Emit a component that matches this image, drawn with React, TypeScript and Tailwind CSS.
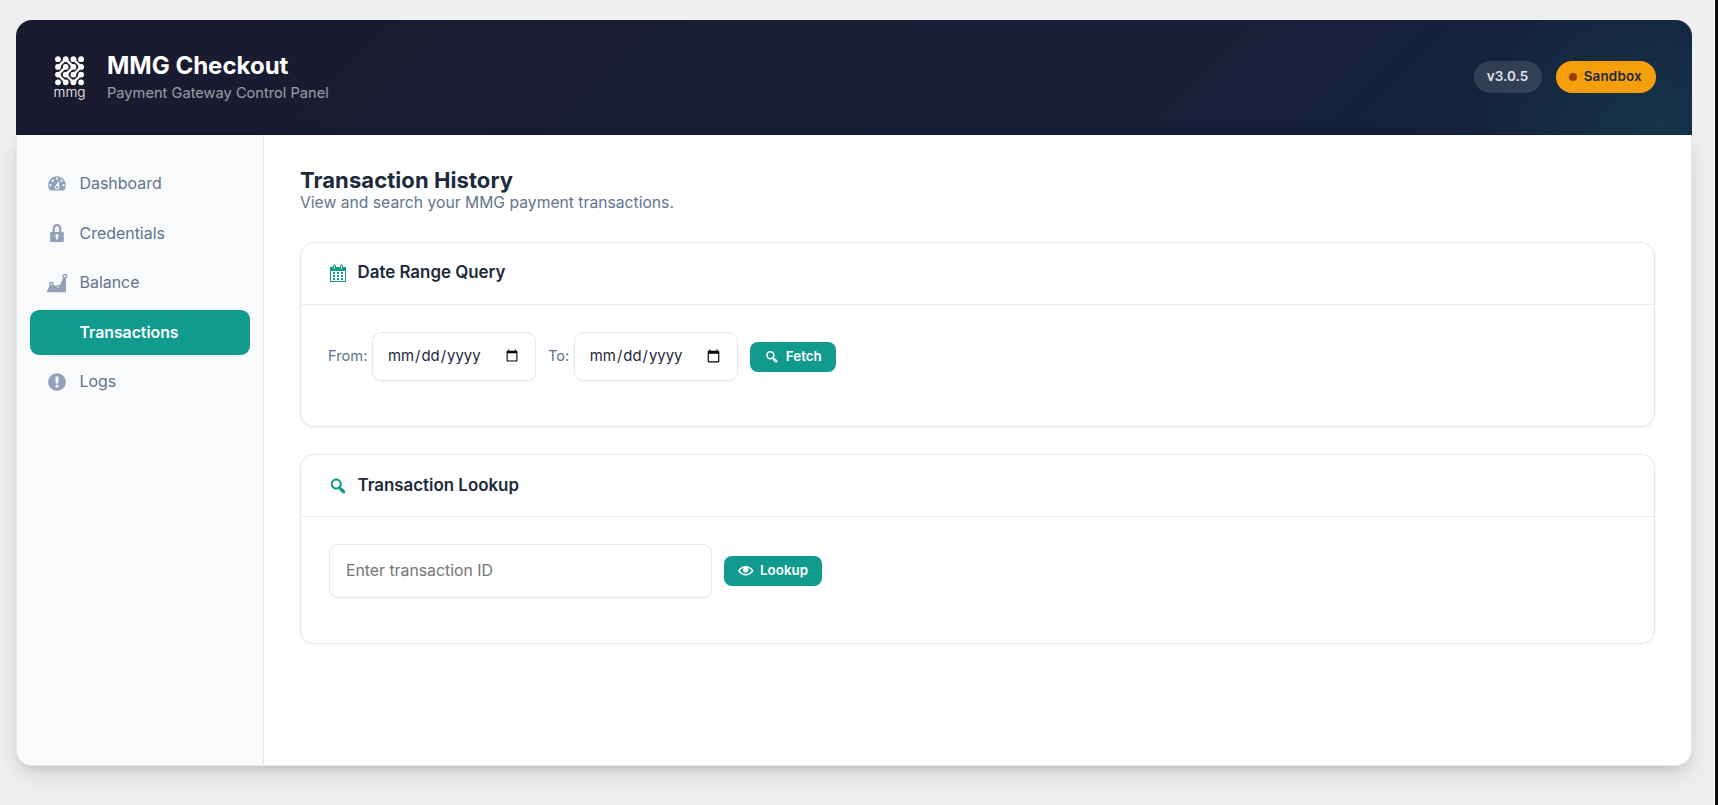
import type { ReactNode } from "react";

const ICONS = {
  dashboard:
    "M3.76 16h12.48c1.1-1.37 1.76-3.11 1.76-5 0-4.42-3.58-8-8-8s-8 3.58-8 8c0 1.89.66 3.63 1.76 5zM10 4c.55 0 1 .45 1 1s-.45 1-1 1-1-.45-1-1 .45-1 1-1zM6 6c.55 0 1 .45 1 1s-.45 1-1 1-1-.45-1-1 .45-1 1-1zm8 0c.55 0 1 .45 1 1s-.45 1-1 1-1-.45-1-1 .45-1 1-1zm-5.37 5.55L12 7v6c0 1.1-.9 2-2 2s-2-.9-2-2c0-.57.24-1.08.63-1.45zM4 10c.55 0 1 .45 1 1s-.45 1-1 1-1-.45-1-1 .45-1 1-1zm12 0c.55 0 1 .45 1 1s-.45 1-1 1-1-.45-1-1 .45-1 1-1zm-5 3c0-.55-.45-1-1-1s-1 .45-1 1 .45 1 1 1 1-.45 1-1z",
  lock: "M14 9h1c.7 0 1.2.45 1.2 1v7.2c0 .55-.45 1-1 1H4.8c-.55 0-1-.45-1-1V10c0-.55.5-1 1.2-1h1V6c0-2.5 1.79-4.2 4-4.2s4 1.7 4 4.2v3zm-2 0V6c0-1.3-.9-2.2-2-2.2S8 4.7 8 6v3h4zm-1 7l-.36-2.15c.51-.24.86-.75.86-1.35 0-.83-.67-1.5-1.5-1.5s-1.5.67-1.5 1.5c0 .6.35 1.11.86 1.35L9 16h2z",
  chart: "M.5 18.5L3.700 11.500H6.400L10 13L12.500 12L15.800 5H18.200V18.500z",
  warning:
    "M10 2c4.42 0 8 3.58 8 8s-3.58 8-8 8-8-3.58-8-8 3.58-8 8-8zm1.13 9.38l.35-6.46H8.52l.35 6.46h2.26zm-.09 3.36c.24-.23.37-.55.37-.96 0-.42-.12-.74-.36-.97s-.59-.35-1.06-.35-.82.12-1.07.35-.37.55-.37.97c0 .41.13.73.38.96.26.23.61.34 1.06.34s.8-.11 1.05-.34z",
  calendar:
    "M15 4h3v15H2V4h3V3c0-.41.15-.76.44-1.06.29-.29.65-.44 1.06-.44s.77.15 1.06.44c.29.3.44.65.44 1.06v1h4V3c0-.41.15-.76.44-1.06.29-.29.65-.44 1.06-.44s.77.15 1.06.44c.29.3.44.65.44 1.06v1zM6 3v2.5c0 .14.05.26.15.36.09.09.21.14.35.14s.26-.05.35-.14c.1-.1.15-.22.15-.36V3c0-.14-.05-.26-.15-.35-.09-.1-.21-.15-.35-.15s-.26.05-.35.15c-.1.09-.15.21-.15.35zm7 0v2.5c0 .14.05.26.14.36.1.09.22.14.36.14s.26-.05.36-.14c.09-.1.14-.22.14-.36V3c0-.14-.05-.26-.14-.35-.1-.1-.22-.15-.36-.15s-.26.05-.36.15c-.09.09-.14.21-.14.35zm4 15V8H3v10h14zM5 9h2v2H5V9zm4 0h2v2H9V9zm4 0h2v2h-2V9zm-8 3h2v2H5v-2zm4 0h2v2H9v-2zm4 0h2v2h-2v-2zm-8 3h2v2H5v-2zm4 0h2v2H9v-2zm4 0h2v2h-2v-2z",
  search:
    "M12.14 4.18c1.87 1.87 2.11 4.75.72 6.89.12.1.22.21.36.31.2.16.47.36.81.59.34.24.56.39.66.47.42.31.73.57.94.78.32.32.6.65.84 1 .25.35.44.69.59 1.04.14.35.21.68.18 1-.02.32-.14.59-.36.81s-.49.34-.81.36c-.31.02-.65-.04-.99-.19-.35-.14-.7-.34-1.04-.59-.35-.24-.68-.52-1-.84-.21-.21-.47-.52-.77-.93-.1-.13-.25-.35-.47-.66-.22-.32-.4-.57-.56-.78-.16-.2-.29-.35-.44-.5-2.07 1.09-4.69.76-6.44-.98-2.14-2.15-2.14-5.64 0-7.78 2.15-2.15 5.63-2.15 7.78 0zm-1.41 6.36c1.36-1.37 1.36-3.58 0-4.95-1.37-1.37-3.59-1.37-4.95 0-1.37 1.37-1.37 3.58 0 4.95 1.36 1.37 3.58 1.37 4.95 0z",
  eye: "M19.7 9.4C17.7 6 14 3.9 10 3.9S2.3 6 .3 9.4L0 10l.3.6c2 3.4 5.7 5.5 9.7 5.5s7.7-2.1 9.7-5.5l.3-.6-.3-.6zM10 14.1c-3.1 0-6-1.6-7.7-4.1C3.6 8 5.7 6.6 8 6.1c-.9.6-1.5 1.7-1.5 2.9 0 1.9 1.6 3.5 3.5 3.5s3.5-1.6 3.5-3.5c0-1.2-.6-2.3-1.5-2.9 2.3.5 4.4 1.9 5.7 3.9-1.7 2.5-4.6 4.1-7.7 4.1z",
};

type IconName = keyof typeof ICONS;

function Icon({ name, className }: { name: IconName; className: string }) {
  return (
    <svg viewBox="0 0 20 20" fill="currentColor" fillRule="evenodd" overflow="visible" className={className}>
      <path d={ICONS[name]} />
      {name === "chart" && (
        <g fill="#f8fafc" stroke="currentColor" strokeWidth="1.3">
          <circle cx="4.9" cy="11" r="1.5" />
          <circle cx="10.9" cy="13.7" r="1.3" />
          <circle cx="17.1" cy="3.8" r="1.6" />
        </g>
      )}
    </svg>
  );
}

const DOTS = [0, 1, 2, 3].flatMap((row) => [0, 1, 2, 3].map((col) => ({ x: 6 + col * 7.7, y: 4.2 + row * 7.7 })));

function Logo() {
  return (
    <svg viewBox="0 0 34 46" className="h-[46px] w-[34px]" fill="white" overflow="visible">
      {DOTS.map((d) => (
        <circle key={`${d.x}-${d.y}`} cx={d.x} cy={d.y} r="2.9" />
      ))}
      <path
        stroke="white"
        strokeWidth="2.4"
        fill="none"
        d="M6 11.9L13.7 4.2M21.4 4.2L29.1 11.9M13.7 4.2L21.4 11.9M6 19.6L13.7 11.9M13.7 19.6L21.4 11.9M21.4 19.6L29.1 11.9M6 19.6L13.7 27.3M13.7 19.6L21.4 27.3L29.1 19.6"
      />
      <text x="17.5" y="42" textAnchor="middle" textLength="32" lengthAdjust="spacingAndGlyphs" fontSize="13.2" fontWeight="300" fontFamily="Inter, sans-serif">
        mmg
      </text>
    </svg>
  );
}

const NAV: { label: string; icon?: IconName; active?: boolean }[] = [
  { label: "Dashboard", icon: "dashboard" },
  { label: "Credentials", icon: "lock" },
  { label: "Balance", icon: "chart" },
  { label: "Transactions", active: true },
  { label: "Logs", icon: "warning" },
];

function Card({ icon, title, className, headClass, children }: { icon: IconName; title: string; className: string; headClass: string; children: ReactNode }) {
  return (
    <section className={`flex flex-col rounded-[14px] border border-slate-200 bg-white shadow-[0_1px_3px_rgba(0,0,0,0.06)] ${className}`}>
      <div className={`flex h-[62px] shrink-0 items-center gap-[9.5px] border-b border-[#ebeff4] px-[27px] ${headClass}`}>
        <Icon name={icon} className="size-5 text-[#109b8e]" />
        <h3 className="text-[16.9px] font-semibold text-slate-800">{title}</h3>
      </div>
      {children}
    </section>
  );
}

function Button({ icon, children }: { icon: IconName; children: string }) {
  return (
    <button className="flex h-[30px] items-center gap-[6.5px] rounded-lg bg-[#109b8e] px-[14px] text-[13.3px] font-semibold tracking-[0.06px] text-white">
      <Icon name={icon} className="size-[15.5px]" />
      {children}
    </button>
  );
}

function DateField({ label }: { label: string }) {
  return (
    <label className="flex items-center gap-[5px] text-[14.7px] text-slate-500">
      {label}
      <input
        type="date"
        className="h-[49px] w-[163.5px] rounded-[9px] border border-slate-200 bg-white px-[13.5px] text-[14.9px] text-slate-800 shadow-[0_1px_2px_rgba(0,0,0,0.05)]"
      />
    </label>
  );
}

export default function App() {
  return (
    <div className="flex h-[805px] w-[1718px] overflow-hidden bg-[#efefef] font-['Inter',sans-serif]">
      <div className="flex flex-1 flex-col pt-5 pr-[22px] pl-4">
        <header className="flex h-[115px] items-center justify-between rounded-t-2xl bg-[radial-gradient(circle_at_98%_115%,rgba(16,155,142,0.17),transparent_210px),linear-gradient(135deg,#1a1a2e_0%,#16213e_100%)] px-9">
          <div className="flex items-center gap-[21px]">
            <Logo />
            <div className="flex flex-col pt-px">
              <h1 className="text-2xl leading-[30px] font-bold text-white">MMG Checkout</h1>
              <p className="text-[14.65px] leading-6 text-white/55">Payment Gateway Control Panel</p>
            </div>
          </div>
          <div className="flex items-center gap-[14px] pb-[2px]">
            <span className="flex h-8 w-[68px] items-center justify-center rounded-full bg-white/12 pr-px text-[13.5px] font-semibold text-white/85">v3.0.5</span>
            <span className="flex h-8 w-[100px] items-center justify-center gap-[6.5px] rounded-full bg-[#f59e0b] pr-px text-[13.4px] font-semibold tracking-[0.2px] text-slate-800">
              <span className="size-2 rounded-full bg-[#92400e]" />
              Sandbox
            </span>
          </div>
        </header>
        <div className="flex h-[631px] overflow-hidden rounded-b-2xl border border-t-0 border-slate-200 bg-white shadow-[0_10px_25px_-3px_rgba(0,0,0,0.14),0_4px_10px_-4px_rgba(0,0,0,0.14)]">
          <nav className="flex w-[247px] shrink-0 flex-col gap-[4.6px] border-r border-slate-200 bg-slate-50 px-[13px] pt-[26.4px]">
            {NAV.map((item) => (
              <a
                key={item.label}
                className={`flex h-[45px] items-center gap-[11.5px] rounded-[9px] pl-4 ${
                  item.active ? "bg-[#109b8e] text-[15.8px] font-semibold text-white" : "text-[15.95px] text-slate-500"
                }`}
              >
                <span className="flex size-[22px] items-center justify-center text-slate-400">
                  {item.icon && <Icon name={item.icon} className="size-[22px]" />}
                </span>
                {item.label}
              </a>
            ))}
          </nav>
          <main className="flex flex-1 flex-col px-9 pt-[31px]">
            <h2 className="text-[22px] leading-[28px] font-bold tracking-[0.08px] text-slate-800">Transaction History</h2>
            <p className="text-[15.7px] leading-[18px] text-slate-500">View and search your MMG payment transactions.</p>
            <Card icon="calendar" title="Date Range Query" className="mt-[30px] h-[185px]" headClass="pb-[2px]">
              <div className="flex items-center gap-3 px-[27px] pt-[27px]">
                <DateField label="From:" />
                <DateField label="To:" />
                <Button icon="search">Fetch</Button>
              </div>
            </Card>
            <Card icon="search" title="Transaction Lookup" className="mt-[27px] h-[190px]" headClass="pb-0">
              <div className="flex items-center gap-3 px-7 pt-[27px]">
                <input
                  placeholder="Enter transaction ID"
                  className="h-[54px] w-[383px] rounded-[9px] border border-slate-200 bg-white px-4 pb-px text-[15.8px] text-slate-800 shadow-[0_1px_2px_rgba(0,0,0,0.05)] placeholder:text-[#757575]"
                />
                <Button icon="eye">Lookup</Button>
              </div>
            </Card>
          </main>
        </div>
      </div>
      <div className="w-1 shrink-0 border-l border-white bg-[#0d0d0d]" />
    </div>
  );
}
